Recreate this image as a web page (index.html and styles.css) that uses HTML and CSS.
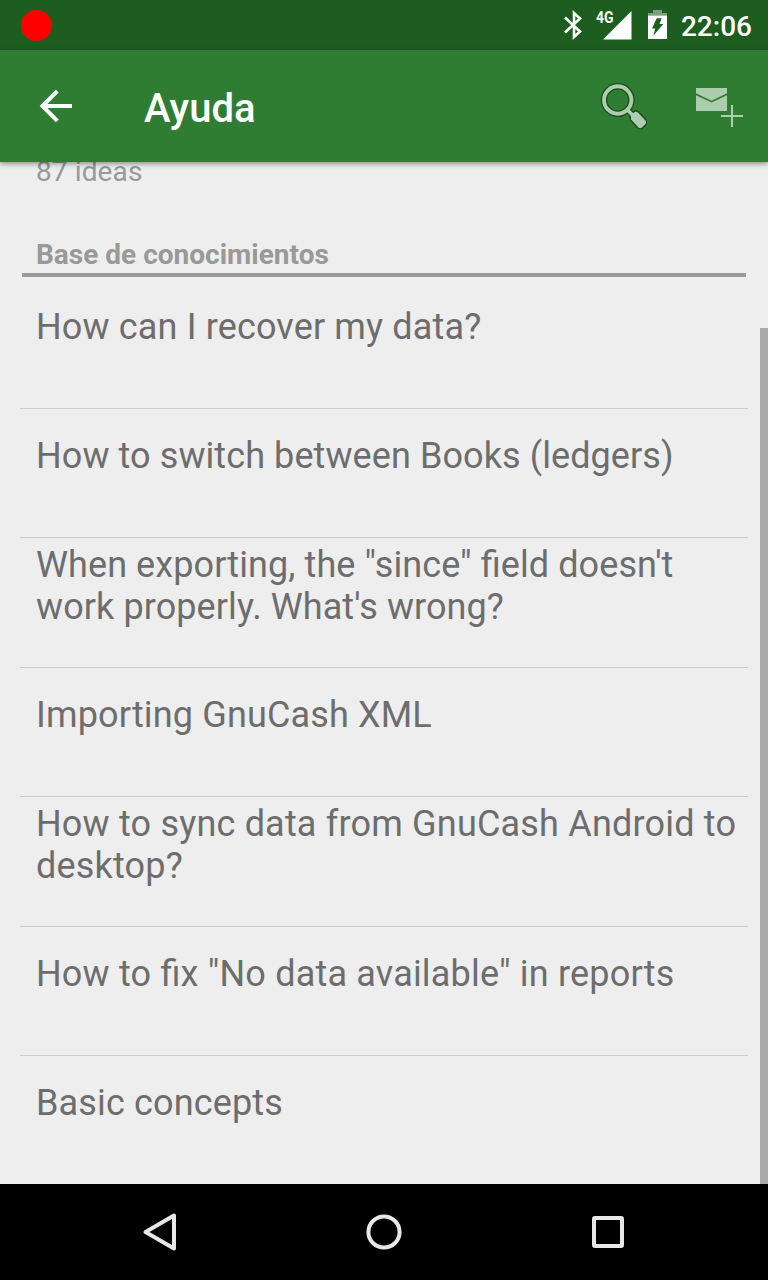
FILE: index.html
```html
<!DOCTYPE html>
<html lang="es">
<head>
<meta charset="utf-8">
<title>Ayuda</title>
<link rel="stylesheet" href="styles.css">
</head>
<body>
<div class="screen">
  <header class="status-bar">
    <span class="record-dot"></span>
    <svg class="bluetooth" width="20" height="30" viewBox="0 0 20 30" fill="none" stroke="#fff" stroke-width="2.6"><path d="M1 7.500 16 21.500 10 27V3L16 8.500 1 22.500"/></svg>
    <div class="signal">
      <svg width="37" height="30" viewBox="0 0 37 30"><path d="M36.500 1V29.500H8Z" fill="#fff"/></svg>
      <span class="network">4G</span>
    </div>
    <svg class="battery" width="20" height="30" viewBox="0 0 20 30"><path d="M6 0h9V3h5v2.500H1V3h5z" fill="#79a17a"/><path d="M1 5.500H20V29H1Z" fill="#fff"/><path d="M9.700 8.300h5L12.500 14h3.800L6.300 25.700 8.300 18.500H5z" fill="#1b5e20"/></svg>
    <span class="clock">22:06</span>
  </header>
  <div class="toolbar">
    <svg class="back" width="34" height="34" viewBox="0 0 34 34" fill="none" stroke="#fff" stroke-width="4"><path d="M33 17H4M18.300 2.200 3.500 17l14.800 14.800"/></svg>
    <h1 class="title">Ayuda</h1>
    <svg class="search" width="50" height="50" viewBox="0 0 50 50" fill="none">
      <g stroke="#1d4e20">
        <circle cx="17.700" cy="17" r="13.700" stroke-width="6.400"/>
        <path d="m27 26.500 6 6" stroke-width="6"/>
        <path d="M31 31.500 35.500 28.500 38 29.500 45.500 37.500 45.500 41 41.500 45 38.500 44.500 31 36.500Z" stroke-width="3" stroke-linejoin="round"/>
      </g>
      <circle cx="17.700" cy="17" r="13.700" stroke="#accdae" stroke-width="3.900"/>
      <path d="m27 26.500 6 6" stroke="#accdae" stroke-width="3.600"/>
      <path d="M31 31.500 35.500 28.500 38 29.500 45 37Q47 39 45.200 41.300L42 44.500Q40 46.300 38 44L31 36.500Z" fill="#accdae"/>
    </svg>
    <svg class="contact" width="48" height="40" viewBox="0 0 48 40"><path d="M0 0H31V5.300L15.500 12.700 0 5.300ZM0 7.200 15.500 14.400 31 7.200V23H0Z" fill="#accdae"/><path d="M25 28H47M36 17V39" stroke="#accdae" stroke-width="2"/></svg>
  </div>
  <main class="content">
    <p class="ideas">87 ideas</p>
    <h2 class="section">Base de conocimientos</h2>
    <ul class="articles">
      <li class="loose">How can I recover my data?</li>
      <li>How to switch between Books (ledgers)</li>
      <li class="two-line">When exporting, the "since" field doesn't work properly. What's wrong?</li>
      <li class="loose">Importing GnuCash XML</li>
      <li class="two-line looser">How to sync data from GnuCash Android to desktop?</li>
      <li class="looser">How to fix "No data available" in reports</li>
      <li class="loose">Basic concepts</li>
    </ul>
    <div class="scrollbar"></div>
  </main>
  <nav class="nav-bar">
    <svg width="40" height="40" viewBox="0 0 40 40"><path d="M34 3.500V36.500L5.500 20Z"/></svg>
    <svg width="40" height="40" viewBox="0 0 40 40"><circle cx="20" cy="20" r="15.600"/></svg>
    <svg width="40" height="40" viewBox="0 0 40 40"><rect x="6" y="6" width="28" height="28" rx="1"/></svg>
  </nav>
</div>
</body>
</html>
```
FILE: styles.css
```css
* { box-sizing: border-box; }
body { margin: 0; font-family: Roboto, sans-serif; }
h1, h2, p, ul { margin: 0; padding: 0; }
svg { display: block; flex: none; }
.screen {
  width: 768px;
  height: 1280px;
  display: flex;
  flex-direction: column;
  overflow: hidden;
  background: #eee;
}
.status-bar {
  height: 50px;
  flex: none;
  display: flex;
  align-items: flex-start;
  padding: 10px 16px 0 21px;
  background: #1d5e20;
  color: #fff;
}
.record-dot {
  width: 31px;
  height: 31px;
  border-radius: 50%;
  background: #f00;
  margin-right: auto;
}
.bluetooth { margin-right: 11px; }
.signal { position: relative; margin-right: 15px; }
.network {
  position: absolute;
  left: 1px;
  top: 0;
  font-size: 16px;
  line-height: 16px;
  font-weight: 700;
  transform: scaleX(.87);
  transform-origin: 0 0;
}
.battery { margin-right: 14px; }
.clock { font-size: 28px; line-height: 33px; font-weight: 500; }
.toolbar {
  position: relative;
  z-index: 1;
  height: 112px;
  flex: none;
  display: flex;
  align-items: flex-start;
  padding: 33px 24px 0 39px;
  background: #2f7d32;
  box-shadow: 0 2px 5px rgba(0, 0, 0, .4);
}
.back { margin-top: 6px; }
.title {
  margin-left: 71px;
  margin-right: auto;
  color: #fff;
  font-size: 40px;
  line-height: 52px;
  font-weight: 500;
}
.contact { margin: 5px 0 0 46px; }
.content { position: relative; height: 1022px; flex: none; }
.ideas {
  height: 76px;
  margin-top: -7px;
  padding-left: 36px;
  color: #999;
  font-size: 28px;
  line-height: 33px;
  letter-spacing: .12px;
}
.section {
  margin: 0 22px;
  height: 46px;
  padding: 7px 14px 0;
  border-bottom: 4px solid #999;
  color: #999;
  font-size: 28px;
  line-height: 33px;
  font-weight: 700;
}
.articles {
  margin: 3px 20px 0;
  list-style: none;
  color: #6d6d6d;
  font-size: 36px;
  line-height: 42px;
  letter-spacing: .09px;
  font-feature-settings: "liga" 1;
}
.articles li {
  height: 129px;
  padding: 26px 8px 0 16px;
  border-bottom: 1px solid #ccc;
}
.articles .loose { letter-spacing: .15px; }
.articles .looser { letter-spacing: .19px; }
.articles .two-line { height: 130px; padding-top: 6px; }
.articles li:last-child { border-bottom: 0; }
.scrollbar {
  position: absolute;
  right: 0;
  top: 166px;
  bottom: 0;
  width: 8px;
  background: #aaa;
}
.nav-bar {
  height: 96px;
  flex: none;
  display: flex;
  align-items: center;
  justify-content: space-between;
  padding: 0 140px;
  background: #000;
}
.nav-bar svg { fill: none; stroke: #e8e8e8; stroke-width: 4; stroke-linejoin: round; }
```
